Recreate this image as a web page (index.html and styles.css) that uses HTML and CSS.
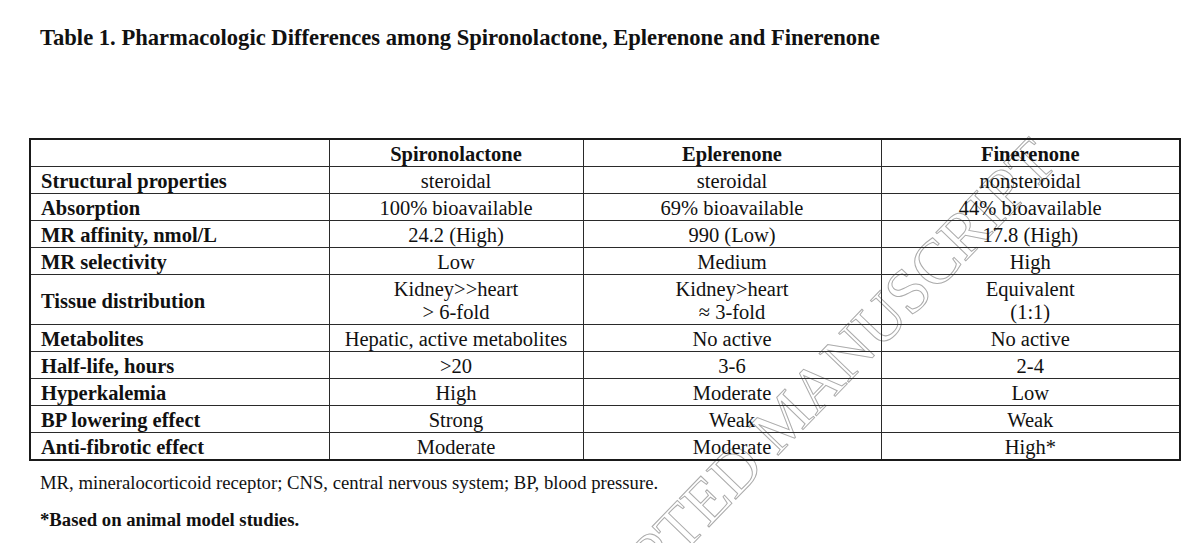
FILE: index.html
```html
<!DOCTYPE html>
<html lang="en">
<head>
<meta charset="utf-8">
<title>Table 1</title>
<link rel="stylesheet" href="styles.css">
</head>
<body>
<div class="page">
  <svg class="watermark" width="1200" height="543" viewBox="0 0 1200 543" aria-hidden="true">
    <text class="wm-text" transform="translate(540 702) rotate(-46)">ACCEPTED MANUSCRIPT</text>
  </svg>
  <div class="content">
    <h1 class="title">Table 1. Pharmacologic Differences among Spironolactone, Eplerenone and Finerenone</h1>
    <table class="pharma">
      <colgroup>
        <col class="c1"><col class="c2"><col class="c3"><col class="c4">
      </colgroup>
      <thead>
        <tr><th class="label"></th><th>Spironolactone</th><th>Eplerenone</th><th>Finerenone</th></tr>
      </thead>
      <tbody>
        <tr><td class="label">Structural properties</td><td>steroidal</td><td>steroidal</td><td>nonsteroidal</td></tr>
        <tr><td class="label">Absorption</td><td>100% bioavailable</td><td>69% bioavailable</td><td>44% bioavailable</td></tr>
        <tr><td class="label">MR affinity, nmol/L</td><td>24.2 (High)</td><td>990 (Low)</td><td>17.8 (High)</td></tr>
        <tr><td class="label">MR selectivity</td><td>Low</td><td>Medium</td><td>High</td></tr>
        <tr class="double"><td class="label">Tissue distribution</td><td>Kidney&gt;&gt;heart<br>&gt; 6-fold</td><td>Kidney&gt;heart<br>&asymp; 3-fold</td><td>Equivalent<br>(1:1)</td></tr>
        <tr><td class="label">Metabolites</td><td>Hepatic, active metabolites</td><td>No active</td><td>No active</td></tr>
        <tr><td class="label">Half-life, hours</td><td>&gt;20</td><td>3-6</td><td>2-4</td></tr>
        <tr><td class="label">Hyperkalemia</td><td>High</td><td>Moderate</td><td>Low</td></tr>
        <tr><td class="label">BP lowering effect</td><td>Strong</td><td>Weak</td><td>Weak</td></tr>
        <tr><td class="label">Anti-fibrotic effect</td><td>Moderate</td><td>Moderate</td><td>High*</td></tr>
      </tbody>
    </table>
    <p class="note">MR, mineralocorticoid receptor; CNS, central nervous system; BP, blood pressure.</p>
    <p class="note bold">*Based on animal model studies.</p>
  </div>
</div>
</body>
</html>
```
FILE: styles.css
```css
html, body {
  margin: 0;
  padding: 0;
  background: #ffffff;
}

body {
  font-family: "Liberation Serif", "Times New Roman", serif;
  color: #111111;
}

.page {
  position: relative;
  width: 1200px;
  height: 543px;
  overflow: hidden;
}

.watermark {
  position: absolute;
  left: 0;
  top: 0;
  z-index: 0;
}

.wm-text {
  font-family: "Liberation Serif", "Times New Roman", serif;
  font-size: 63px;
  fill: none;
  stroke: #ababab;
  stroke-width: 1;
}

.content {
  position: relative;
  z-index: 1;
  padding: 25px 0 0 29px;
}

.title {
  margin: 0 0 87px 11px;
  font-size: 22.6px;
  line-height: 26px;
  font-weight: bold;
}

.pharma {
  border-collapse: collapse;
  table-layout: fixed;
  width: 1150px;
  font-size: 20.5px;
  line-height: 22.1px;
  border: 2px solid #1a1a1a;
}

.c1 { width: 299px; }
.c2 { width: 254px; }
.c3 { width: 298px; }
.c4 { width: 299px; }

.pharma th,
.pharma td {
  border: 1px solid #2a2a2a;
  padding: 3px 0 1px 0;
  text-align: center;
  vertical-align: middle;
  white-space: nowrap;
}

.pharma th {
  font-weight: bold;
}

.pharma td.label,
.pharma th.label {
  text-align: left;
  padding-left: 10px;
  font-weight: bold;
}

.note {
  margin: 11px 0 0 11px;
  font-size: 18.7px;
  line-height: 22px;
}

.note.bold {
  margin-top: 15px;
  font-weight: bold;
}
```
